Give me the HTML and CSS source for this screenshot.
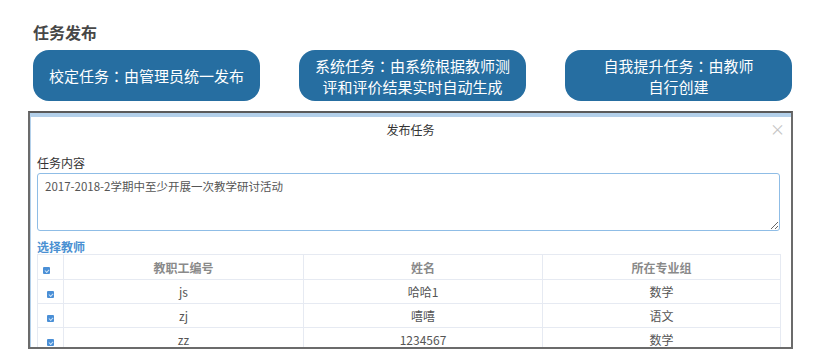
FILE: index.html
```html
<!DOCTYPE html>
<html lang="zh">
<head>
<meta charset="utf-8">
<link rel="stylesheet" href="styles.css">
</head>
<body>
<div class="page">
  <div class="intro">
    <h1 class="title">任务发布</h1>
    <div class="types">
      <div class="type"><p class="type-text">校定任务<span class="colon" lang="zh-Hant-TW">：</span>由管理员统一发布</p></div>
      <div class="type"><p class="type-text">系统任务<span class="colon" lang="zh-Hant-TW">：</span>由系统根据教师测<br>评和评价结果实时自动生成</p></div>
      <div class="type"><p class="type-text">自我提升任务<span class="colon" lang="zh-Hant-TW">：</span>由教师<br>自行创建</p></div>
    </div>
  </div>
  <div class="frame">
    <div class="dlg-head">
      <span class="dlg-title">发布任务</span>
      <span class="dlg-close">×</span>
    </div>
    <div class="dlg-body">
      <div class="field-label">任务内容</div>
      <textarea class="content">2017-2018-2学期中至少开展一次教学研讨活动</textarea>
      <div class="section-label">选择教师</div>
      <table class="teachers">
        <colgroup>
          <col class="c-check"><col class="c-id"><col class="c-name"><col class="c-group">
        </colgroup>
        <thead>
          <tr><th class="chk-head"><span class="chk"></span></th><th>教职工编号</th><th>姓名</th><th>所在专业组</th></tr>
        </thead>
        <tbody>
          <tr><td><span class="chk"></span></td><td>js</td><td>哈哈1</td><td>数学</td></tr>
          <tr><td><span class="chk"></span></td><td>zj</td><td>嘻嘻</td><td>语文</td></tr>
          <tr><td><span class="chk"></span></td><td>zz</td><td>1234567</td><td>数学</td></tr>
        </tbody>
      </table>
    </div>
  </div>
</div>
</body>
</html>
```
FILE: styles.css
```css
* { box-sizing: border-box; }
html, body { margin: 0; padding: 0; background: #fff; }
body { font-family: "Noto Sans CJK SC", "Noto Sans", sans-serif; }
.page { padding: 22px 26px 0 28px; }
.intro { padding-left: 5px; }
.title {
  margin: 0 0 8px 0;
  font-size: 16px;
  line-height: 20px;
  font-weight: 700;
  color: #474747;
}
.types { display: flex; gap: 39px; }
.type {
  width: 227px;
  height: 51px;
  border-radius: 16px;
  background: #266ea1;
  color: #fff;
  display: flex;
  align-items: center;
  justify-content: center;
}
.type-text {
  margin: 0;
  font-size: 15px;
  line-height: 21px;
  text-align: center;
  white-space: nowrap;
}
.colon { font-family: "Noto Sans CJK TC", "Noto Sans CJK JP", sans-serif; }
.frame {
  margin-top: 10px;
  width: 765px;
  height: 238px;
  border: 2px solid #6b6b6b;
  border-top-color: #5a5a5a;
  overflow: hidden;
  background: #fff;
  box-shadow: inset 1px 0 0 #b3d0ea;
}
.dlg-head {
  border-top: 4px solid #b3d0ea;
  height: 30px;
  display: flex;
  align-items: center;
  justify-content: center;
  position: relative;
}
.dlg-title { font-size: 12px; color: #333; line-height: 26px; }
.dlg-close {
  position: absolute;
  right: 6px;
  top: 2px;
  font-size: 15px;
  line-height: 20px;
  color: #c4c4c4;
}
.dlg-body { padding: 0 10px 0 7px; }
.field-label {
  margin-top: 11px;
  font-size: 12px;
  line-height: 17px;
  color: #333;
}
.content {
  display: block;
  margin-top: 2px;
  width: 743px;
  height: 58px;
  border: 1px solid #8fbde6;
  border-radius: 3px;
  padding: 4px 7px;
  font-family: "Noto Sans CJK SC", "Noto Sans", sans-serif;
  font-size: 11.5px;
  line-height: 16px;
  color: #555;
  resize: vertical;
  outline: none;
}
.section-label {
  margin-top: 8px;
  font-size: 12px;
  line-height: 15px;
  font-weight: 700;
  color: #4a90d2;
}
.teachers {
  width: 743px;
  border-collapse: collapse;
  table-layout: fixed;
  font-size: 12px;
  color: #555;
}
.c-check { width: 26px; }
.c-id { width: 240px; }
.c-name { width: 239px; }
.c-group { width: 238px; }
.teachers th, .teachers td {
  border: 1px solid #e6eaf2;
  text-align: center;
  padding: 0;
}
.teachers th { height: 25px; font-weight: 700; color: #8a8a8a; font-size: 12px; }
.teachers td { height: 24px; }
.chk {
  display: inline-block;
  width: 7px;
  height: 7px;
  background: #4a8fd6;
  border-radius: 1px;
  vertical-align: middle;
  position: relative;
  top: 1px;
}
.chk::after {
  content: "";
  position: absolute;
  left: 2px;
  top: 2px;
  width: 3px;
  height: 2px;
  border-left: 1px solid #cfe3f7;
  border-bottom: 1px solid #cfe3f7;
  transform: rotate(-45deg);
}
.chk-head { text-align: left !important; padding-left: 5px !important; }
```
